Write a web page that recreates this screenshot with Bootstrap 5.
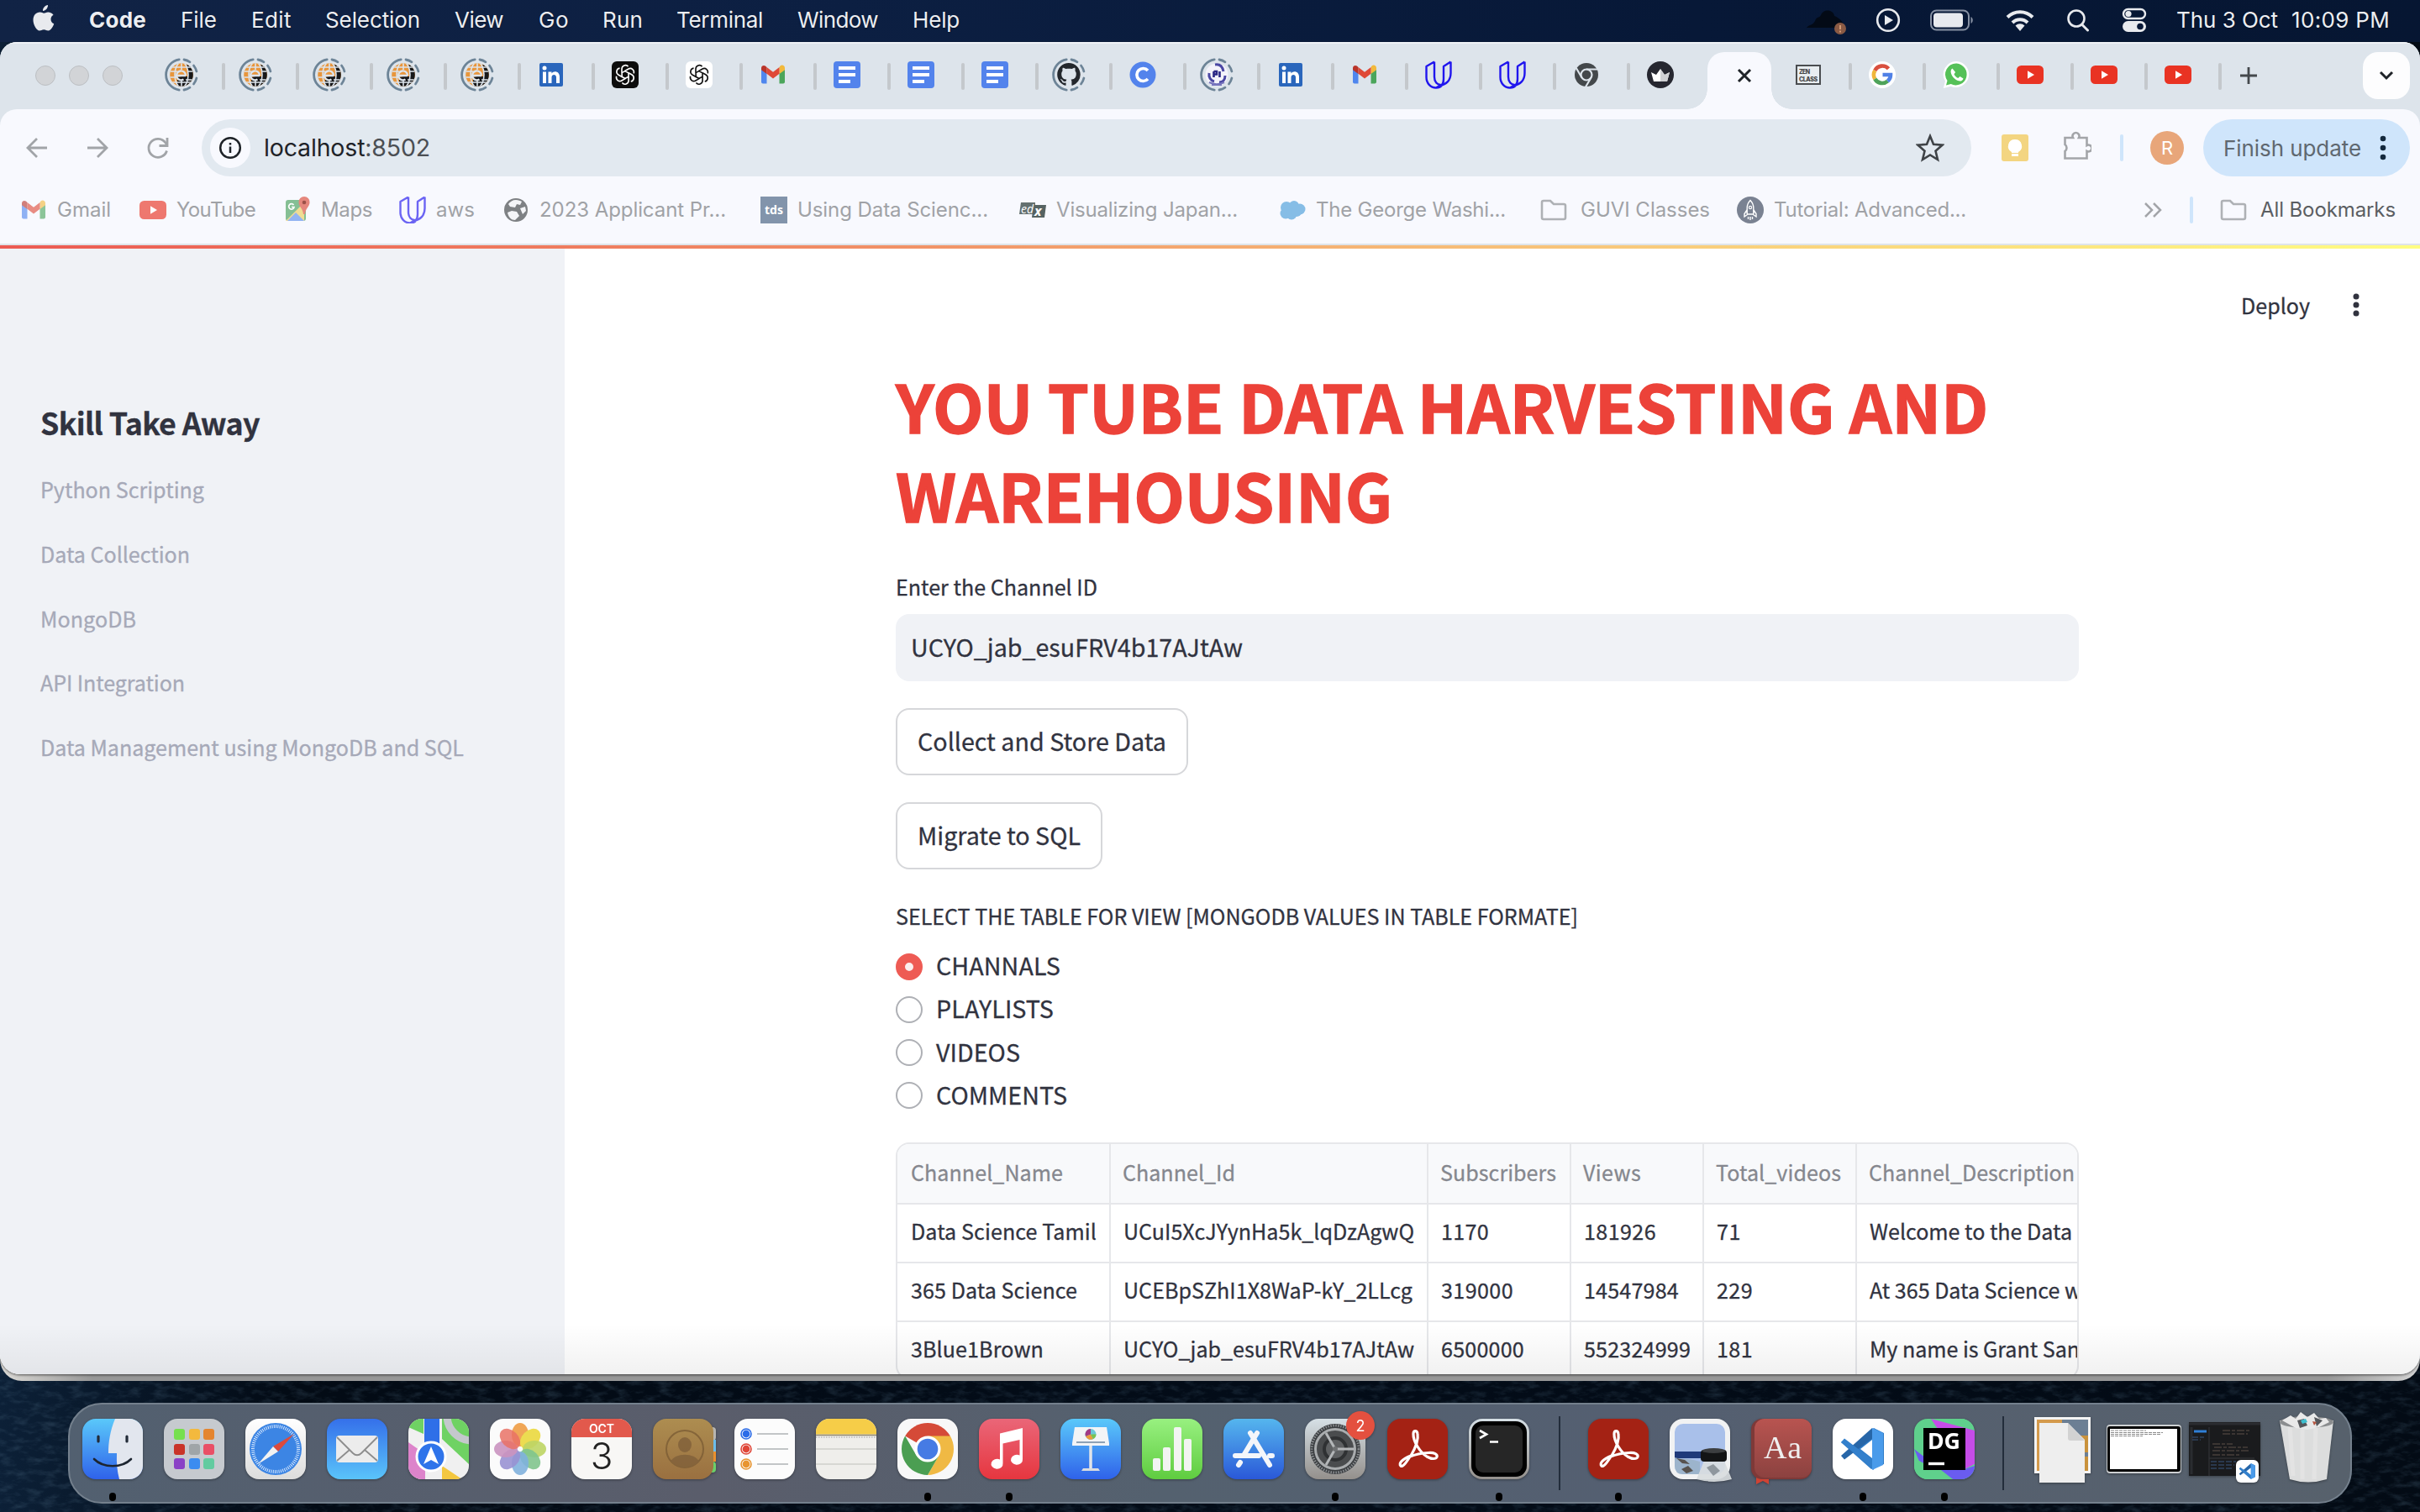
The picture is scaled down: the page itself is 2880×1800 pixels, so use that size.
<!DOCTYPE html>
<html lang="en">
<head>
<meta charset="utf-8">
<title>YouTube Data Harvesting and Warehousing</title>
<link rel="stylesheet" href="https://cdn.jsdelivr.net/npm/bootstrap@5.3.0/dist/css/bootstrap.min.css">
<style>
:root{--sys:Inter,"Liberation Sans",sans-serif;--app:"Noto Sans CJK SC","Noto Sans",sans-serif}
body{width:2880px;height:1800px;overflow:hidden;background:#030b15;font-family:var(--sys);color:#31333f}
svg{display:block;flex:none}
span{white-space:nowrap}
.desktop{width:2880px;height:1800px;background:linear-gradient(90deg,#0c2037 0,#030b15 340px,#030c18 1500px,#030b15 100%);position:relative}
.sea{position:absolute;left:0;top:1600px;opacity:.3}
.layer{position:relative}
.menubar{height:50px;background:linear-gradient(90deg,#112345 0,#0c1f42 35%,#071837 70%,#061632 100%);color:#eceef2;font-size:26px;padding:0 36px 3px 39px;text-shadow:0 1px 2px rgba(0,0,0,.4)}
.menubar .m{flex:none}
.behind{height:1594px;padding-bottom:8px;border-radius:24px 24px 26px 26px;background:linear-gradient(90deg,#dcdad6 0,#979797 110px,#979797 2770px,#d4d4d4 100%);}
.win{height:1586px;border-radius:20px 20px 24px 24px;overflow:hidden;background:#dde4eb;box-shadow:0 1px 3px rgba(0,0,0,.6)}
.strip{height:80px;border-top:2px solid #eef2f6;background:#dde4eb;padding-bottom:2px}
.lights{width:180px;padding-left:42px;gap:16px}
.lights i{width:24px;height:24px;border-radius:50%;background:#d2d4d7;border:1px solid #bcbfc3}
.tabc{width:88px;padding-left:14px;height:78px;flex:none}
.tabc svg{width:44px;height:44px;margin-top:-2px}
.tabc b{width:4px;height:32px;border-radius:2px;background:#c4c8cc;margin-left:26px;flex:none;margin-top:1px}
.tabon{width:76px;height:68px;margin:10px 8px 0 4px;padding-bottom:12px;background:#f8f9fe;border-radius:20px 20px 0 0;position:relative;align-self:flex-start}
.tabon:before,.tabon:after{content:"";position:absolute;bottom:0;width:24px;height:24px}
.tabon:before{left:-24px;background:radial-gradient(circle at 0 0,transparent 23.5px,#f8f9fe 24px)}
.tabon:after{right:-24px;background:radial-gradient(circle at 100% 0,transparent 23.5px,#f8f9fe 24px)}
.chev{width:56px;height:56px;border-radius:18px;background:#fdfdfe;margin-right:12px}
.tools{height:160px;background:#f8f9fe;border-radius:20px 20px 0 0}
.addr-row{height:92px;padding-left:28px;padding-right:12px}
.omni{width:2106px;height:68px;border-radius:34px;background:#e2e9f0;padding:0 32px 0 10px;margin-left:16px}
.omni .dot{width:48px;height:48px;border-radius:50%;background:#f8f9fe}
.url{font-size:28.5px;color:#1f2328}
.url em{font-style:normal;color:#4b4f54}
.vline{width:4px;height:32px;background:#cfe5fb;border-radius:2px}
.avatar{width:40px;height:40px;border-radius:50%;background:#e8a67a;color:#fff;font-size:22px}
.finish{width:246px;height:68px;border-radius:34px;background:#cfe5fb;color:#5f6870;font-size:26px;padding:0 28px 0 24px}
.marks{height:56px;padding-left:24px;font-size:24px;color:#a0a2a6}
.marks .bm{gap:12px;flex:none}
.marks .bm svg{width:32px;height:32px}
.hair{height:2px;background:#dfe4e9}
.deco{height:4px;background:linear-gradient(90deg,#ec5b53 0,#f08a64 33%,#f8c77b 66%,#fffd82 100%);flex:none}
.app{height:1340px;background:#fff;font-family:var(--app);position:relative;-webkit-text-stroke:.3px currentColor}
.app:after{content:"";position:absolute;left:0;right:0;bottom:0;height:60px;background:linear-gradient(180deg,rgba(0,0,0,0),rgba(0,0,0,.055));pointer-events:none}
.side{width:672px;background:#f0f2f6;padding:176px 0 0 48px;flex:none}
.side h2{font-size:35.8px;line-height:60px;font-weight:700;margin:0 0 12px;color:#31333f}
.side p{font-size:25.07px;line-height:76.8px;margin:0;color:#a6a9b8}
.main{flex:1;padding:134px 0 0 394px;position:relative}
.col-main{width:1408px}
.main h1{font-size:78.8px;line-height:105.6px;font-weight:700;color:#ec4239;margin:0;-webkit-text-stroke:1.4px currentColor}
.lab{font-size:25.07px;line-height:40px}
.inp{height:80px;border:0;border-radius:16px;background:#f0f2f6;margin-top:13px;padding:0 0 2px 18px;font-size:28.65px;color:#31333f}
.sbtn{height:80px;border:2px solid #d6d7da;border-radius:16px;background:#fff;font-size:28.65px;margin-top:32px;padding:0 0 2px;color:#31333f;font-family:var(--app);-webkit-text-stroke:.3px currentColor}
.rad{height:51.2px;font-size:28.65px;gap:16px}
.rad i{width:32px;height:32px;border-radius:50%;border:2px solid #aeb0b5;background:#fff}
.rad.on i{border:11px solid #ee5b54;background:#fbeeee}
.rad span{position:relative;top:-1px}
.frame{height:282px;border:2px solid #e6e7ea;border-radius:16px;overflow:hidden;margin-top:30px}
.frame table{width:1430px;table-layout:fixed;margin:0;font-size:25.07px;--bs-table-bg:transparent;border-collapse:separate;border-spacing:0}
.frame th,.frame td{padding:0 0 0 15px;border:0 solid #e6e7ea;border-width:0 2px 2px 0;height:70px;line-height:62px;vertical-align:top;white-space:nowrap;color:#31333f}
.frame th{height:72px;line-height:66px;font-weight:400;color:#85878e;background:#f8f9fb;padding-left:14px}
.frame tr>:first-child{padding-left:16px}
.deploy{position:absolute;right:70px;top:47px;font-size:25.07px;line-height:40px}
.deploy svg{margin-left:49px}
.dock{width:2718px;height:120px;border:2px solid #74808d;border-radius:40px;background:linear-gradient(90deg,#526070 0,#5a5d6b 28%,#54616f 48%,#545f71 68%,#57616c 100%);margin:26px 0 0 81px;padding:0 3px}
.slot{width:97.07px;height:116px;flex:none;padding-top:13px;position:relative;left:-1px}
.slot>svg{width:80px;height:80px;overflow:visible;filter:drop-shadow(0 1px 1.5px rgba(0,0,0,.35))}
.slot .run{width:8px;height:10px;border-radius:4px;background:#000;margin-top:12px}
.dsep{flex:none;display:flex;justify-content:center;padding-top:14px}
.dsep i{width:2px;height:88px;background:#232d3b}
</style>
</head>
<body>
<svg width="0" height="0" class="position-absolute">
<defs>
<linearGradient id="gBlue" x1="0" y1="0" x2="0" y2="1"><stop offset="0" stop-color="#5ac8fa"/><stop offset="1" stop-color="#2f62ea"/></linearGradient>
<linearGradient id="gMail" x1="0" y1="0" x2="0" y2="1"><stop offset="0" stop-color="#3570ea"/><stop offset="1" stop-color="#5ac4fa"/></linearGradient>
<linearGradient id="gApp" x1="0" y1="0" x2="0" y2="1"><stop offset="0" stop-color="#55b6ee"/><stop offset="1" stop-color="#2a58d8"/></linearGradient>
<linearGradient id="gMus" x1="0" y1="0" x2="0" y2="1"><stop offset="0" stop-color="#ea6678"/><stop offset="1" stop-color="#e6363f"/></linearGradient>
<linearGradient id="gGrn" x1="0" y1="0" x2="0" y2="1"><stop offset="0" stop-color="#98f080"/><stop offset="1" stop-color="#5fcc40"/></linearGradient>
<linearGradient id="gGry" x1="0" y1="0" x2="0" y2="1"><stop offset="0" stop-color="#d6e0e6"/><stop offset="1" stop-color="#94908c"/></linearGradient>
<linearGradient id="gWht" x1="0" y1="0" x2="0" y2="1"><stop offset="0" stop-color="#fff"/><stop offset="1" stop-color="#dcdcdc"/></linearGradient>
<linearGradient id="gBrn" x1="0" y1="0" x2="0" y2="1"><stop offset="0" stop-color="#ad8d50"/><stop offset="1" stop-color="#9a7040"/></linearGradient>
<linearGradient id="gBook" x1="0" y1="0" x2="0" y2="1"><stop offset="0" stop-color="#b85450"/><stop offset="1" stop-color="#8c4240"/></linearGradient>
<clipPath id="cR"><rect width="72" height="72" rx="16"/></clipPath>
<clipPath id="cG"><circle cx="22" cy="22" r="13.800"/></clipPath>

<symbol id="ring" viewBox="0 0 44 44"><g fill="none" stroke="#6d8497" stroke-width="2.800" stroke-linecap="round"><path d="M19.200 3.900a18.300 18.300 0 0 0 0 36.200"/><path d="M25 4a18 18 0 0 1 7 2.800M36.500 11a18 18 0 0 1 3.400 7M39.900 26a18 18 0 0 1-3.400 7M32 37.200a18 18 0 0 1-7 2.800"/></g></symbol>
<symbol id="e" viewBox="0 0 44 44"><use href="#ring"/><g clip-path="url(#cG)"><rect width="44" height="44" fill="#e8963c"/><path d="M28 6h14v34H17V25l5-1h8z" fill="#17181a"/><path d="M22 8v8M22 29v7M8 18h9M27 28h9M8 25h9M29 18h7M8 31h28M10 13h24" stroke="#dde4eb" stroke-width="1.600"/><ellipse cx="22" cy="22" rx="8" ry="15" fill="none" stroke="#dde4eb" stroke-width="1.600"/><path d="M16.500 23h10.500M27 23a5.500 5.500 0 1 0-2.500 4.500" fill="none" stroke="#dde4eb" stroke-width="2.400"/></g></symbol>
<symbol id="in" viewBox="0 0 44 44"><rect x="8" y="8" width="28" height="28" rx="2" fill="#2a66bc"/><circle cx="14" cy="14" r="2.500" fill="#fff"/><path d="M12 18.500h4V32h-4zM18.500 18.500h4v2c2.500-4 9.500-3 9.500 4V32h-4v-7c0-4-5.500-4-5.500 0v7h-4z" fill="#fff"/></symbol>
<symbol id="knot" viewBox="-12 -12 24 24"><g fill="none" stroke="currentColor" stroke-width="1.500" stroke-linejoin="round"><path id="k1" d="M-3.700-2.200V-6.500a4 4 0 0 1 7-2.600M-.2-4.200 3.700-6.500a4 4 0 0 1 5.600 5M-.2-4.200 3.700-2V2.200"/><use href="#k1" transform="rotate(120)"/><use href="#k1" transform="rotate(240)"/></g></symbol>
<symbol id="gptb" viewBox="0 0 44 44"><rect x="6" y="6" width="32" height="32" rx="6" fill="#0d0d0d"/><use href="#knot" x="9" y="9" width="26" height="26" color="#fff"/></symbol>
<symbol id="gptw" viewBox="0 0 44 44"><rect x="6" y="6" width="32" height="32" rx="6" fill="#fff"/><use href="#knot" x="9" y="9" width="26" height="26" color="#111"/></symbol>
<symbol id="gm" viewBox="0 0 44 44"><path d="M8 14v16.500a2 2 0 0 0 2 2h4.500V20z" fill="#4f86ee"/><path d="M36 14v16.500a2 2 0 0 1-2 2h-4.500V20z" fill="#4ba55b"/><path d="M29.500 13v8L36 16.200V14c0-3-3.200-4.300-5.300-2.700z" fill="#f2b93b"/><path d="M14.500 20.700V13L22 18.700 29.500 13v7.700L22 26.500z" fill="#df4937"/><path d="M8 14v2.200l6.500 4.800v-8l-1.700-1.400C10.800 10 8 11.500 8 14z" fill="#b9342a"/></symbol>
<symbol id="doc" viewBox="0 0 44 44"><rect x="6" y="6" width="32" height="32" rx="4" fill="#5383ec"/><path d="M12 14h20M12 22h20M12 30h14" stroke="#fff" stroke-width="4"/></symbol>
<symbol id="gh" viewBox="0 0 44 44"><use href="#ring"/><path transform="translate(8.200 8) scale(1.720)" fill="#23272c" d="M8 0C3.580 0 0 3.580 0 8c0 3.540 2.290 6.530 5.470 7.590.4.070.55-.17.55-.38 0-.19-.01-.82-.01-1.490-2.010.37-2.530-.49-2.690-.94-.09-.23-.48-.94-.82-1.130-.28-.15-.68-.52-.01-.53.63-.01 1.080.58 1.230.82.72 1.210 1.870.87 2.330.66.07-.52.28-.87.51-1.070-1.780-.2-3.640-.89-3.640-3.950 0-.87.31-1.590.82-2.150-.08-.2-.36-1.020.08-2.120 0 0 .67-.21 2.200.82.64-.18 1.320-.27 2-.27s1.360.09 2 .27c1.530-1.040 2.200-.82 2.200-.82.44 1.100.16 1.920.08 2.120.51.56.82 1.270.82 2.150 0 3.070-1.870 3.750-3.650 3.950.29.25.54.73.54 1.480 0 1.070-.01 1.930-.01 2.200 0 .21.15.46.55.38A8.010 8.010 0 0 0 16 8c0-4.420-3.580-8-8-8z"/></symbol>
<symbol id="cc" viewBox="0 0 44 44"><circle cx="22" cy="22" r="15.500" fill="#5383ec"/><path d="M28 17a7.500 7.500 0 1 0 0 10" fill="none" stroke="#fff" stroke-width="3.600"/></symbol>
<symbol id="seal" viewBox="0 0 44 44"><use href="#ring"/><circle cx="22" cy="22" r="13.500" fill="#f3f2fa"/><path d="M20 10c6-1 9 3 10 8M32 23c0 5-3 8-7 8M13 20c-1 5 2 9 6 10" fill="none" stroke="#4a47a3" stroke-width="3"/><path d="M18.500 18v7M18.500 18h3.500v3.500h-3.500M25.500 18v7" fill="none" stroke="#2a2784" stroke-width="2.600"/><path d="M13 31c6 3 12 3 18 0M16 34h12" stroke="#7674bc" stroke-width="2.200" fill="none"/></symbol>
<symbol id="ud" viewBox="0 0 44 44"><path d="M17 6.500 7.500 12v13c0 7 5 12.500 11.500 12.500l5.500-3.200M17 6.500v18c0 6 3.500 9.500 7.500 9.500M36.500 6.500 28 12v15c0 5-2 7-3.500 7.500M36.500 6.500V20c0 9-6 14-12 14.300M7.500 12v13c0 7 5 12.500 11.500 12.500S28 33 28 27" fill="none" stroke="#2015ee" stroke-width="2.400" stroke-linejoin="round"/></symbol>
<symbol id="chk" viewBox="0 0 44 44"><circle cx="22" cy="22" r="14" fill="#44484b"/><g stroke="#dde4eb" stroke-width="2.200" fill="none"><circle cx="22" cy="22" r="6.500"/><path d="M22 15.500h13M27.600 25.200 21 36.500M16.400 25.200 9.800 14"/></g></symbol>
<symbol id="crown" viewBox="0 0 44 44"><circle cx="22" cy="22" r="16" fill="#262730"/><path d="M11 19l6 3 5-7 5 7 6-3-3 11H14z" fill="#fff"/><path d="M22 15l5 7 6-3-3 11H22z" fill="#cfd0d3"/></symbol>
<symbol id="zen" viewBox="0 0 44 44"><rect x="8" y="11" width="28" height="22" fill="#e8edf0" stroke="#4a4d50" stroke-width="2"/><text x="11" y="20.500" font-family="Inter" font-weight="800" font-size="7" fill="#444" textLength="13">ZEN</text><text x="11" y="29.500" font-family="Inter" font-weight="800" font-size="7" fill="#444" textLength="22">CLASS</text></symbol>
<symbol id="goo" viewBox="0 0 44 44"><circle cx="22" cy="22" r="16" fill="#fff"/><g fill="none" stroke-width="4.600"><path d="M29.500 14.700A10 10 0 0 0 13.300 17" stroke="#d9503f"/><path d="M13.300 17a10 10 0 0 0 0 10" stroke="#f0b73a"/><path d="M13.300 27a10 10 0 0 0 15.200 2.600" stroke="#4ea35a"/><path d="M28.500 29.600C31 27.600 32 25 32 22h-9.500" stroke="#5081e6"/></g></symbol>
<symbol id="wa" viewBox="0 0 44 44"><path d="M22.500 6A15.500 15.500 0 0 0 9 29.500L6.800 38l8.700-2.300A15.500 15.500 0 1 0 22.500 6z" fill="#fff"/><path d="M22.500 8.500A13 13 0 0 0 11.500 29L10 34.600l5.800-1.500A13 13 0 1 0 22.500 8.500z" fill="#55c158"/><path d="M17.500 14.500c-4 2.500-1 9 2.500 12s9 5 10.500 0l-4-2.500-2.200 2c-2.200-.8-4-2.800-4.800-4.800l1.600-2.200z" fill="#fff"/></symbol>
<symbol id="yt" viewBox="0 0 44 44"><rect x="6" y="11" width="32" height="22" rx="5.500" fill="#e93323"/><path d="M19 17.200v9.600l8-4.800z" fill="#fff"/></symbol>
<symbol id="fold" viewBox="0 0 32 32"><path d="M2 25V7a2 2 0 0 1 2-2h8l4 4h12a2 2 0 0 1 2 2v14a2 2 0 0 1-2 2H4a2 2 0 0 1-2-2z" fill="none" stroke="#aeb1b5" stroke-width="2.600"/></symbol>
<symbol id="acro" viewBox="0 0 72 72"><rect width="72" height="72" rx="16" fill="#a42214"/><path d="M16 56c-3-3 2-8 12-12 6-10 9-20 8-26-.5-4.500-5-4.500-5 0-.3 9 8 22 16 27 6 3.500 11 3 12 .500 1-3-3-5.500-10-5-8 .5-16 2-22 4.500-5 8-9 13-11 11z" fill="none" stroke="#fff" stroke-width="3.200" stroke-linejoin="round"/></symbol>
<symbol id="vs" viewBox="0 0 72 72"><path d="M49 11 24 32.500 14 25l-4 3 36 32 15-6V17z" fill="#2f7cc8"/><path d="M47 11 10 44l4 4.500L49 22z" fill="#2766a8"/><path d="M10 28l4-4.500L49 50v11z" fill="#3380cc"/><path d="M47 11l13 6v38l-13 6z" fill="#4a9bea"/><path d="M47 25v22L33 36z" fill="#fff"/></symbol>
</defs>
</svg>

<div class="desktop">
<svg class="sea" width="2880" height="200"><filter id="wave" x="0" y="0" width="1" height="1"><feTurbulence type="fractalNoise" baseFrequency=".06 .14" numOctaves="4" seed="7"/><feColorMatrix values="0 0 0 0 .12  0 0 0 0 .22  0 0 0 0 .32  1.800 0 0 0 -.8"/></filter><rect width="2880" height="200" filter="url(#wave)"/></svg>
<div class="layer d-flex flex-column">

<header class="menubar d-flex align-items-center">
  <svg width="26" height="32" viewBox="0 0 26 32" style="margin-right:41px;margin-top:-4px"><path d="M18 0c.3 3-2.500 7-6 7-.3-3.200 2.500-6.600 6-7zM21.500 17c0-3.500 2.800-5 3-5.200C22.500 9 19.500 8.600 18.500 8.500c-2.300-.2-4 1.300-5.300 1.300-1.200 0-2.700-1.300-4.700-1.200C4 8.700.5 12 .5 18c0 5.500 4 12.500 7.500 12.500 2 0 2.700-1.300 5.200-1.300s3 1.300 5.200 1.300c3.500 0 6-5.500 6.800-8.200-2.300-1-3.700-2.600-3.700-5.300z" fill="#e8eaee"/></svg>
  <div class="m fw-bold" style="width:109px"><span data-w="68">Code</span></div>
  <div class="m" style="width:84px"><span data-w="43">File</span></div>
  <div class="m" style="width:88px"><span data-w="48">Edit</span></div>
  <div class="m" style="width:154px"><span data-w="113">Selection</span></div>
  <div class="m" style="width:100px"><span data-w="58">View</span></div>
  <div class="m" style="width:76px"><span data-w="36">Go</span></div>
  <div class="m" style="width:88px"><span data-w="48">Run</span></div>
  <div class="m" style="width:144px"><span data-w="103">Terminal</span></div>
  <div class="m" style="width:137px"><span data-w="96">Window</span></div>
  <div class="m"><span data-w="56">Help</span></div>
  <div class="ms-auto d-flex align-items-center">
    <svg width="50" height="34" viewBox="0 0 50 34" class="mt-1" style="margin-right:33px"><path d="M1 24c3-4 8-3 10-8 2-6 5-3 7-7 3-8 15-7 16 1 5 2 11 6 12 14z" fill="#030a16"/><circle cx="41" cy="25" r="7" fill="#8a5a44"/><path d="M41 21v5M41 27.500v2" stroke="#d9a07a" stroke-width="1.800"/></svg>
    <svg width="30" height="30" viewBox="0 0 30 30" style="margin-right:35px"><circle cx="15" cy="15" r="12.800" fill="none" stroke="#e8eaee" stroke-width="2.600"/><path d="M11 9v12l10-6z" fill="#e8eaee"/></svg>
    <svg width="52" height="26" viewBox="0 0 52 26" style="margin-right:37px"><rect x="1" y="1.500" width="45" height="23" rx="6.500" fill="none" stroke="#8791a3" stroke-width="2"/><rect x="4" y="4.500" width="35" height="17" rx="4" fill="#e8eaee"/><path d="M48.500 9c3 1.500 3 6.500 0 8z" fill="#8791a3"/></svg>
    <svg width="36" height="28" viewBox="0 0 36 28" style="margin-right:37px"><g fill="none" stroke="#e8eaee" stroke-width="4"><path d="M3 10.500a21 21 0 0 1 30 0"/><path d="M9 17a12.500 12.500 0 0 1 18 0"/></g><path d="M12.500 20.500a8 8 0 0 1 11 0L18 27z" fill="#e8eaee"/></svg>
    <svg width="28" height="28" viewBox="0 0 28 28" style="margin-right:38px"><circle cx="12" cy="12" r="9.500" fill="none" stroke="#e8eaee" stroke-width="2.600"/><path d="m18.500 19 7 7" stroke="#e8eaee" stroke-width="3" stroke-linecap="round"/></svg>
    <svg width="30" height="30" viewBox="0 0 30 30" style="margin-right:35px"><rect x="2" y="2" width="26" height="11" rx="5.500" fill="none" stroke="#e8eaee" stroke-width="2.400"/><circle cx="8" cy="7.500" r="3.600" fill="#e8eaee"/><rect x="1" y="16" width="28" height="13" rx="6.500" fill="#e8eaee"/><circle cx="22" cy="22.500" r="3.800" fill="#071837"/></svg>
    <span data-w="121">Thu 3 Oct</span><span data-w="117" style="margin-left:16px">10:09 PM</span>
  </div>
</header>

<div class="behind"><div class="win d-flex flex-column">
  <div class="strip d-flex align-items-center">
    <div class="lights d-flex"><i></i><i></i><i></i></div>
    <div class="d-flex" id="tabsA"></div>
    <div class="tabon d-flex align-items-center justify-content-center"><svg width="18" height="18" viewBox="0 0 18 18" style="margin-left:12px"><path d="m2 2 14 14M16 2 2 16" stroke="#1f2328" stroke-width="3"/></svg></div>
    <div class="d-flex" id="tabsB"></div>
    <svg width="22" height="22" viewBox="0 0 22 22" style="margin-left:21px"><path d="M11 1v20M1 11h20" stroke="#44484c" stroke-width="2.800"/></svg>
    <div class="chev ms-auto d-flex align-items-center justify-content-center"><svg width="18" height="12" viewBox="0 0 18 12"><path d="m2 2 7 7 7-7" fill="none" stroke="#1f2328" stroke-width="3"/></svg></div>
  </div>
  <div class="tools">
    <div class="addr-row d-flex align-items-center">
      <svg width="32" height="32" viewBox="0 0 32 32" style="margin-right:40px"><path d="M28 16H6M16 5 5 16l11 11" fill="none" stroke="#a1a4a8" stroke-width="2.800"/></svg>
      <svg width="32" height="32" viewBox="0 0 32 32" style="margin-right:40px"><path d="M4 16h22M16 5l11 11-11 11" fill="none" stroke="#a1a4a8" stroke-width="2.800"/></svg>
      <svg width="32" height="32" viewBox="0 0 32 32" style="margin-right:20px"><path d="M26.500 19.500A11 11 0 1 1 25 10l2 3" fill="none" stroke="#a1a4a8" stroke-width="2.800"/><path d="M27 4v9.500h-9.500" fill="none" stroke="#a1a4a8" stroke-width="2.800"/></svg>
      <div class="omni d-flex align-items-center">
        <div class="dot d-flex align-items-center justify-content-center"><svg width="28" height="28" viewBox="0 0 28 28"><circle cx="14" cy="14" r="11.800" fill="none" stroke="#1f2328" stroke-width="2.500"/><path d="M14 12.500V20M14 8v2.600" stroke="#1f2328" stroke-width="2.500"/></svg></div>
        <span class="url" style="margin-left:16px" data-w="198">localhost<em>:8502</em></span>
        <svg class="ms-auto" width="34" height="34" viewBox="0 0 34 34"><path d="m17 3 4 9.800 10.500.9-8 7 2.500 10.300-9-5.500-9 5.500 2.500-10.300-8-7 10.500-.9z" fill="none" stroke="#3f4347" stroke-width="2.600"/></svg>
      </div>
      <svg width="32" height="32" viewBox="0 0 32 32" style="margin-left:36px"><rect width="32" height="32" rx="3" fill="#f3d581"/><path d="M16 6a8 8 0 0 0-4 15v1h8v-1a8 8 0 0 0-4-15zM12 23h8v3h-8z" fill="#fff"/></svg>
      <svg width="34" height="36" viewBox="0 0 34 36" style="margin-left:41px;margin-top:-4px"><path d="M2.500 8h9.500a4 4 0 1 1 7 0h9.500v9a4 4 0 1 1 0 7v8.500h-26V24a5 5 0 0 0 0-8z" fill="none" stroke="#a3a5a9" stroke-width="2.600"/></svg>
      <div class="vline" style="margin-left:34px"></div>
      <div class="avatar d-flex align-items-center justify-content-center" style="margin-left:32px">R</div>
      <div class="finish d-flex align-items-center ms-auto"><span data-w="164">Finish update</span><svg class="ms-auto" width="8" height="30" viewBox="0 0 8 30"><g fill="#14293d"><circle cx="4" cy="4" r="3.300"/><circle cx="4" cy="15" r="3.300"/><circle cx="4" cy="26" r="3.300"/></g></svg></div>
    </div>
    <div class="marks d-flex align-items-center">
      <div class="bm d-flex align-items-center" style="width:142px"><svg viewBox="6 6 32 32" opacity=".62"><use href="#gm" width="44" height="44"/></svg><span data-w="64">Gmail</span></div>
      <div class="bm d-flex align-items-center" style="width:172px"><svg viewBox="6 6 32 32" opacity=".65"><use href="#yt" width="44" height="44"/></svg><span data-w="94">YouTube</span></div>
      <div class="bm d-flex align-items-center" style="width:137px"><svg viewBox="0 0 32 32"><rect x="2" y="4" width="24" height="25" rx="3" fill="#85bf94"/><path d="M2 29 24 7v22z" fill="#f0dc94"/><path d="M4 29l10-10 10 10z" fill="#92b4f2"/><path d="M24 0a6.500 6.500 0 0 0-6.500 7c0 5 5 7 5.500 14h2c.5-7 5.500-9 5.500-14A6.500 6.500 0 0 0 24 0z" fill="#e5877d"/><circle cx="24" cy="7" r="2.300" fill="#9c5149"/><path d="M11.500 10a3.200 3.200 0 1 0 .5 2.500H9" fill="none" stroke="#fff" stroke-width="1.700"/></svg><span data-w="61">Maps</span></div>
      <div class="bm d-flex align-items-center" style="width:123px"><svg viewBox="6 6 32 32" opacity=".65"><use href="#ud" width="44" height="44"/></svg><span data-w="46">aws</span></div>
      <div class="bm d-flex align-items-center" style="width:307px"><svg viewBox="0 0 32 32"><circle cx="16" cy="16" r="14" fill="#7e8184"/><path d="M16 4c-4 0-7 2-9 5l2 3 6 1 2-4 4 1 2-4c-2-1-4-2-7-2zM6 19l5-2 6 1 3 5-5 5c-5 0-8-4-9-9zM21 14l6-2 1 5-4 4z" fill="#f4f5f8"/></svg><span data-w="222">2023 Applicant Pr...</span></div>
      <div class="bm d-flex align-items-center" style="width:308px"><svg viewBox="0 0 32 32"><rect width="32" height="32" fill="#8294ab"/><text x="5" y="21" font-size="14" font-weight="700" font-family="Noto Sans" fill="#fff" textLength="22">tds</text></svg><span data-w="227">Using Data Scienc...</span></div>
      <div class="bm d-flex align-items-center" style="width:309px"><svg viewBox="0 0 32 32"><path d="M2 7h17v14H0z" fill="#64706f"/><path d="M17 10h15l-2 15H15z" fill="#566362"/><text x="2" y="19.500" font-size="14" font-style="italic" font-family="Open Sans" fill="#fff" textLength="15">ed</text><text x="18" y="23" font-size="16" font-weight="700" font-style="italic" font-family="Open Sans" fill="#fff">x</text></svg><span data-w="216">Visualizing Japan...</span></div>
      <div class="bm d-flex align-items-center" style="width:311px"><svg viewBox="0 0 32 32"><g fill="#86bde6"><circle cx="9" cy="13" r="7"/><circle cx="18" cy="11" r="6"/><circle cx="25" cy="15" r="6.500"/><circle cx="8" cy="20" r="6.500"/><circle cx="15" cy="21" r="6.500"/><circle cx="21" cy="18" r="6"/></g></svg><span data-w="226">The George Washi...</span></div>
      <div class="bm d-flex align-items-center" style="width:234px"><svg viewBox="0 0 32 32"><use href="#fold" width="32" height="32"/></svg><span data-w="154" class="ms-1">GUVI Classes</span></div>
      <div class="bm d-flex align-items-center"><svg viewBox="0 0 32 32"><circle cx="16" cy="16" r="16" fill="#7a8292"/><path d="M16 4.500c3 3 3.800 6 3.800 9V21h-7.600v-7.500c0-3 .8-6 3.800-9zM12 16l-3 4.500V24l3.500-2.500M20 16l3 4.500V24l-3.500-2.500M13.500 24v3M18.500 24v3M16 24v4" fill="none" stroke="#fff" stroke-width="1.400"/><circle cx="16" cy="13" r="1.600" fill="none" stroke="#fff" stroke-width="1.200"/></svg><span data-w="229">Tutorial: Advanced...</span></div>
      <div class="ms-auto d-flex align-items-center"><svg width="22" height="20" viewBox="0 0 22 20"><path d="m2 2 8 8-8 8M12 2l8 8-8 8" fill="none" stroke="#a3a5a9" stroke-width="2.500"/></svg><div class="vline" style="margin:0 32px 0 33px"></div><svg width="32" height="32"><use href="#fold"/></svg><span data-w="161" style="color:#5b5e62;margin:0 29px 0 16px">All Bookmarks</span></div>
    </div>
  </div>
  <div class="hair"></div>
  <div class="deco"></div>
  <div class="app d-flex">
    <aside class="side">
      <h2><span data-w="261">Skill Take Away</span></h2>
      <p><span data-w="195">Python Scripting</span></p>
      <p><span data-w="178">Data Collection</span></p>
      <p><span data-w="114">MongoDB</span></p>
      <p><span data-w="172">API Integration</span></p>
      <p><span data-w="504">Data Management using MongoDB and SQL</span></p>
    </aside>
    <main class="main">
      <div class="deploy d-flex align-items-center"><span data-w="82">Deploy</span><svg width="12" height="32" viewBox="0 0 12 32"><g fill="#31333f"><circle cx="6" cy="6" r="3.500"/><circle cx="6" cy="16" r="3.500"/><circle cx="6" cy="26" r="3.500"/></g></svg></div>
      <div class="col-main">
        <h1><span data-w="1300">YOU TUBE DATA HARVESTING AND</span><br><span data-w="591">WAREHOUSING</span></h1>
        <div class="lab" style="margin-top:37px"><span data-w="240">Enter the Channel ID</span></div>
        <div class="inp d-flex align-items-center"><span data-w="395">UCYO_jab_esuFRV4b17AJtAw</span></div>
        <button class="sbtn d-flex align-items-center justify-content-center" style="width:348px"><span data-w="296">Collect and Store Data</span></button>
        <button class="sbtn d-flex align-items-center justify-content-center" style="width:246px"><span data-w="194">Migrate to SQL</span></button>
        <div class="lab" style="margin:35px 0 15px"><span data-w="812">SELECT THE TABLE FOR VIEW [MONGODB VALUES IN TABLE FORMATE]</span></div>
        <div class="rad on d-flex align-items-center"><i></i><span data-w="148">CHANNALS</span></div>
        <div class="rad d-flex align-items-center"><i></i><span data-w="140">PLAYLISTS</span></div>
        <div class="rad d-flex align-items-center"><i></i><span data-w="100">VIDEOS</span></div>
        <div class="rad d-flex align-items-center"><i></i><span data-w="156">COMMENTS</span></div>
        <div class="frame">
          <table class="table">
            <colgroup><col style="width:254px"><col style="width:378px"><col style="width:170px"><col style="width:158px"><col style="width:182px"><col></colgroup>
            <thead><tr><th><span data-w="181">Channel_Name</span></th><th><span data-w="134">Channel_Id</span></th><th><span data-w="138">Subscribers</span></th><th><span data-w="69">Views</span></th><th><span data-w="149">Total_videos</span></th><th><span data-w="245">Channel_Description</span></th></tr></thead>
            <tbody>
            <tr><td><span data-w="221">Data Science Tamil</span></td><td><span data-w="346">UCuI5XcJYynHa5k_lqDzAgwQ</span></td><td><span data-w="57">1170</span></td><td><span data-w="86">181926</span></td><td><span data-w="29">71</span></td><td><span data-w="241">Welcome to the Data</span></td></tr>
            <tr><td><span data-w="198">365 Data Science</span></td><td><span data-w="344">UCEBpSZhI1X8WaP-kY_2LLcg</span></td><td><span data-w="86">319000</span></td><td><span data-w="113">14547984</span></td><td><span data-w="43">229</span></td><td><span data-w="252">At 365 Data Science w</span></td></tr>
            <tr><td><span data-w="158">3Blue1Brown</span></td><td><span data-w="346">UCYO_jab_esuFRV4b17AJtAw</span></td><td><span data-w="99">6500000</span></td><td><span data-w="127">552324999</span></td><td><span data-w="43">181</span></td><td><span data-w="250">My name is Grant San</span></td></tr>
            </tbody>
          </table>
        </div>
      </div>
    </main>
  </div>
</div></div>

<footer class="dock d-flex">
  <div class="slot d-flex flex-column align-items-center"><svg viewBox="-4 -4 80 80"><g clip-path="url(#cR)"><rect width="72" height="72" fill="url(#gBlue)"/><path d="M39 0c-6 14-8 28-8 41h10c-.5 12 .5 22 3 31h28V0z" fill="#e2e6ee"/></g><path d="M19 21v6M53 21v6" stroke="#222b38" stroke-width="3.200" stroke-linecap="round"/><path d="M14 48c11 11 33 11 44 0" fill="none" stroke="#1d2530" stroke-width="2.600" stroke-linecap="round"/></svg><div class="run"></div></div>
  <div class="slot d-flex flex-column align-items-center"><svg viewBox="-4 -4 80 80"><rect width="72" height="72" rx="16" fill="#c6cacf"/><g><rect x="12" y="12" width="13" height="13" rx="3" fill="#76e04e"/><rect x="30" y="12" width="13" height="13" rx="3" fill="#f3b93d"/><rect x="47" y="12" width="13" height="13" rx="3" fill="#e4852f"/><rect x="12" y="30" width="13" height="13" rx="3" fill="#c93428"/><rect x="30" y="30" width="13" height="13" rx="3" fill="#9fa5a8"/><rect x="47" y="30" width="13" height="13" rx="3" fill="#e94f66"/><rect x="12" y="47" width="13" height="13" rx="3" fill="#8a42c6"/><rect x="30" y="47" width="13" height="13" rx="3" fill="#3b8cf0"/><rect x="47" y="47" width="13" height="13" rx="3" fill="#62cba0"/></g></svg></div>
  <div class="slot d-flex flex-column align-items-center"><svg viewBox="-4 -4 80 80"><rect width="72" height="72" rx="16" fill="url(#gWht)"/><circle cx="36" cy="36" r="31" fill="#3c85e4"/><circle cx="36" cy="36" r="27" fill="none" stroke="#e6f1ff" stroke-width="4" stroke-dasharray=".9 1.450"/><path d="M58 18 33 33l6 6z" fill="#dc4a3c"/><path d="M15 54l18-21 6 6z" fill="#f2f2f2"/></svg></div>
  <div class="slot d-flex flex-column align-items-center"><svg viewBox="-4 -4 80 80"><rect width="72" height="72" rx="16" fill="url(#gMail)"/><rect x="11" y="20" width="50" height="32" rx="4" fill="#ececec"/><path d="m12 50 15-13M60 50 45 37M12 22l19 19c3 3 7 3 10 0l19-19" fill="none" stroke="#8d8d8d" stroke-width="1.800"/></svg></div>
  <div class="slot d-flex flex-column align-items-center"><svg viewBox="-4 -4 80 80"><g clip-path="url(#cR)"><rect width="72" height="72" fill="#f0f0f0"/><path d="M0 0h18v18L0 10zM40 0h32v54L40 24z" fill="#6fd263"/><path d="M0 28l20 14v30H0z" fill="#dd84cb"/><path d="M40 56l24 16H40z" fill="#f3c73f"/><path d="M46-4a30 30 0 0 0 30 30" fill="none" stroke="#c4c8cc" stroke-width="9"/><path d="M19 0h18v40H19z" fill="#2f6fe8"/></g><circle cx="27" cy="45" r="17" fill="#2f74ea" stroke="#fff" stroke-width="3"/><path d="m27 33 9 21-9-5-9 5z" fill="#fff"/></svg></div>
  <div class="slot d-flex flex-column align-items-center"><svg viewBox="-4 -4 80 80"><rect width="72" height="72" rx="16" fill="#fbfbfb"/><g opacity=".85" style="mix-blend-mode:multiply"><ellipse cx="36" cy="19" rx="10" ry="14" fill="#f29a3a"/><ellipse cx="36" cy="19" rx="10" ry="14" fill="#eedb33" transform="rotate(45 36 36)"/><ellipse cx="36" cy="19" rx="10" ry="14" fill="#b5d24a" transform="rotate(90 36 36)" opacity=".9"/><ellipse cx="36" cy="19" rx="10" ry="14" fill="#6bbf7c" transform="rotate(135 36 36)" opacity=".9"/><ellipse cx="36" cy="19" rx="10" ry="14" fill="#6ba7dc" transform="rotate(180 36 36)" opacity=".9"/><ellipse cx="36" cy="19" rx="10" ry="14" fill="#8b82cf" transform="rotate(225 36 36)" opacity=".9"/><ellipse cx="36" cy="19" rx="10" ry="14" fill="#c583b8" transform="rotate(270 36 36)" opacity=".9"/><ellipse cx="36" cy="19" rx="10" ry="14" fill="#ea5a4c" transform="rotate(315 36 36)" opacity=".85"/></g></svg></div>
  <div class="slot d-flex flex-column align-items-center"><svg viewBox="-4 -4 80 80"><g clip-path="url(#cR)"><rect width="72" height="72" fill="#f8f7f5"/><rect width="72" height="22" fill="#e2594c"/></g><text x="36" y="16.500" text-anchor="middle" font-family="Inter" font-weight="600" font-size="14" fill="#fff" textLength="30">OCT</text><text x="36" y="60" text-anchor="middle" font-family="Inter" font-weight="300" font-size="44" fill="#222">3</text></svg></div>
  <div class="slot d-flex flex-column align-items-center"><svg viewBox="-4 -4 80 80"><rect x="60" y="10" width="15" height="16" rx="4" fill="#b7b5b0"/><rect x="60" y="25" width="15" height="14" fill="#6cbdea"/><rect x="60" y="39" width="15" height="12" fill="#e9902f"/><rect x="60" y="51" width="15" height="13" rx="4" fill="#6bd06a"/><rect width="72" height="72" rx="16" fill="url(#gBrn)"/><g fill="#80603a" opacity=".8"><circle cx="38" cy="36" r="22" fill="none" stroke="#7c5d35" stroke-width="2"/><ellipse cx="38" cy="31" rx="8" ry="9"/><path d="M21 51c5-11 29-11 34 0-9 9-25 9-34 0z"/></g></svg></div>
  <div class="slot d-flex flex-column align-items-center"><svg viewBox="-4 -4 80 80"><rect width="72" height="72" rx="16" fill="#fcfcfc"/><g stroke="#c2c5c7" stroke-width="2"><path d="M27 18h37M27 36h37M27 54h37"/></g><g stroke-width="1.600"><circle cx="14" cy="18" r="4.400" fill="#2c6ce8"/><circle cx="14" cy="18" r="6" fill="none" stroke="#2c6ce8"/><circle cx="14" cy="36" r="4.400" fill="#df4638"/><circle cx="14" cy="36" r="6" fill="none" stroke="#df4638"/><circle cx="14" cy="54" r="4.400" fill="#e89530"/><circle cx="14" cy="54" r="6" fill="none" stroke="#e89530"/></g></svg></div>
  <div class="slot d-flex flex-column align-items-center"><svg viewBox="-4 -4 80 80"><g clip-path="url(#cR)"><rect width="72" height="72" fill="#efeeeb"/><rect width="72" height="18.500" fill="#f6cd48"/><path d="M0 19.500h72" stroke="#8f8872" stroke-width="1.500"/><path d="M0 22h72" stroke="#bbb" stroke-width="1.500" stroke-dasharray="1.500 1.500"/><path d="M0 36h72M0 54h72" stroke="#d0cfcb" stroke-width="1.500"/></g></svg></div>
  <div class="slot d-flex flex-column align-items-center"><svg viewBox="-4 -4 80 80"><rect width="72" height="72" rx="16" fill="#f8f8f8"/><path d="M36 36 9.150 20.500A31 31 0 0 1 62.850 20.500z" fill="#d54a38"/><path d="M36 20.500h26.850A31 31 0 0 1 36 67l13.400-23.200z" fill="#f0b944"/><path d="M9.150 20.500A31 31 0 0 0 36 67l13.400-23.200L36 51 22.600 43.700z" fill="#4b9e52"/><circle cx="36" cy="36" r="15.500" fill="#fff"/><circle cx="36" cy="36" r="12.300" fill="#467be4"/></svg><div class="run"></div></div>
  <div class="slot d-flex flex-column align-items-center"><svg viewBox="-4 -4 80 80"><rect width="72" height="72" rx="16" fill="url(#gMus)"/><path d="M25 17.500 52 11v37a7 6 0 1 1-3.500-4.500V25l-20 4.500V53a7 6 0 1 1-3.500-4.500z" fill="#fff"/></svg><div class="run"></div></div>
  <div class="slot d-flex flex-column align-items-center"><svg viewBox="-4 -4 80 80"><rect width="72" height="72" rx="16" fill="url(#gBlue)"/><path d="M17 10h38l3 19v3H14v-3z" fill="#f2f4f6"/><path d="M19 28h34" stroke="#8ea2b6" stroke-width="2"/><circle cx="36" cy="18.500" r="6.500" fill="#6cc8d8"/><path d="M36 18.500V12a6.500 6.500 0 0 0-6 9z" fill="#a23a86"/><path d="M36 18.500l-6 2.500a6.500 6.500 0 0 0 9 3z" fill="#ee9a3a"/><path d="M36 18.500l3 5.500a6.500 6.500 0 0 0 3.500-5.500z" fill="#78c350"/><path d="M36 32v28" stroke="#e2e4e8" stroke-width="3.500"/><path d="M27 59h18l2 3H25z" fill="#d9dbe0"/></svg></div>
  <div class="slot d-flex flex-column align-items-center"><svg viewBox="-4 -4 80 80"><rect width="72" height="72" rx="16" fill="url(#gGrn)"/><g fill="#f2f4f2"><rect x="13" y="47" width="9" height="15" rx="2"/><rect x="25" y="34" width="9" height="28" rx="2"/><rect x="38" y="10" width="9" height="52" rx="2"/><rect x="50" y="24" width="9" height="38" rx="2"/></g></svg></div>
  <div class="slot d-flex flex-column align-items-center"><svg viewBox="-4 -4 80 80"><rect width="72" height="72" rx="16" fill="url(#gApp)"/><g stroke="#f4f6fa" stroke-width="6" stroke-linecap="round"><path d="M40 17 25 42M32 17l23 38M20 52l-2 3M14 44h28M55 44h3"/></g></svg></div>
  <div class="slot d-flex flex-column align-items-center"><svg viewBox="-4 -4 80 80"><rect width="72" height="72" rx="16" fill="url(#gGry)"/><circle cx="36" cy="36" r="30" fill="#3a3d40"/><circle cx="36" cy="36" r="28" fill="none" stroke="#8a8d90" stroke-width="3" stroke-dasharray="1.500 1.500"/><circle cx="36" cy="36" r="23.500" fill="#4a4c4e" stroke="#a9acae" stroke-width="3"/><circle cx="36" cy="36" r="13" fill="#5e6062" stroke="#2f3133" stroke-width="4"/><path d="M36 36h22M36 36 25 17M36 36 25 55" stroke="#b3b6b8" stroke-width="3"/><circle cx="36" cy="36" r="3" fill="#6e7072"/><circle cx="66" cy="8" r="17" fill="#e4503f"/><text x="66" y="14.500" text-anchor="middle" font-family="Inter" font-size="18" fill="#fff">2</text></svg><div class="run"></div></div>
  <div class="slot d-flex flex-column align-items-center"><svg viewBox="-4 -4 80 80"><use href="#acro" width="72" height="72"/></svg></div>
  <div class="slot d-flex flex-column align-items-center"><svg viewBox="-4 -4 80 80"><rect width="72" height="72" rx="16" fill="url(#gGry)"/><rect x="3" y="3" width="66" height="66" rx="13" fill="#000"/><rect x="8" y="8" width="56" height="56" rx="9" fill="#262626"/><path d="m13 14 8 4.500-8 4.500M25 27.500h10" fill="none" stroke="#fff" stroke-width="2.600"/></svg><div class="run"></div></div>
  <div class="dsep" style="width:45px"><i></i></div>
  <div class="slot d-flex flex-column align-items-center"><svg viewBox="-4 -4 80 80"><use href="#acro" width="72" height="72"/></svg><div class="run"></div></div>
  <div class="slot d-flex flex-column align-items-center"><svg viewBox="-4 -4 80 80"><rect width="72" height="72" rx="16" fill="#f1f2f3"/><rect x="6" y="6" width="60" height="60" rx="10" fill="#a9c0ea"/><path d="M6 39h60v8H6z" fill="#1f3a7a"/><path d="M6 46c8 3 14 0 30 5v15H16q-10 0-10-10z" fill="#9cb4cc"/><path d="M8 47l10 2 6 5-9-1zM14 60l8-4 6 6-8 3z" fill="#57524e"/><path d="M41 50h24l9 22q-21 6-42 0z" fill="#d9dde0" opacity=".92"/><path d="M44 58l8-4 8 8-8 6z" fill="#8f979e"/><rect x="37" y="37" width="31" height="14" rx="4" fill="#131415"/><ellipse cx="52.500" cy="38" rx="14" ry="3" fill="#3c3e40"/></svg></div>
  <div class="slot d-flex flex-column align-items-center"><svg viewBox="-4 -4 80 80"><path d="M6 66h15v12l-7-4-8 4z" fill="#cf4334"/><rect width="72" height="72" rx="13" fill="#7e3938"/><rect x="4" y="0" width="68" height="70" rx="12" fill="url(#gBook)"/><text x="15" y="47" font-family="Liberation Serif" font-size="38" fill="#efefef" textLength="45">Aa</text></svg></div>
  <div class="slot d-flex flex-column align-items-center"><svg viewBox="-4 -4 80 80"><rect width="72" height="72" rx="16" fill="#fff"/><use href="#vs" width="72" height="72"/></svg><div class="run"></div></div>
  <div class="slot d-flex flex-column align-items-center"><svg viewBox="-4 -4 80 80"><g clip-path="url(#cR)"><rect width="72" height="72" fill="#5fd08c"/><path d="M20 0l52 14v40L60 60z" fill="#c64ce8"/><path d="M20 0h52v10z" fill="#5fd08c"/><path d="M0 36l46 36h26V56L60 60H10z" fill="#6a5cf0"/><path d="M6 50l40 22H0V56z" fill="#5fd08c"/></g><rect x="11" y="11" width="50" height="50" fill="#000"/><text x="16" y="36" font-family="Noto Sans" font-weight="700" font-size="26" fill="#fff" textLength="39" lengthAdjust="spacingAndGlyphs">DG</text><path d="M17 53.500h19" stroke="#fff" stroke-width="3.400"/></svg><div class="run"></div></div>
  <div class="dsep" style="width:42px"><i></i></div>
  <div class="slot d-flex flex-column align-items-center"><svg viewBox="-4 -4 80 80"><rect x="4" y="-2" width="67" height="67" fill="#f4f4f4"/><rect x="7" y="1" width="61" height="61" fill="#6c7f94"/><path d="M7 1h30v61H7z" fill="#d49a4c"/><path d="M48 20h20v20H48zM60 45h8v17h-8z" fill="#c9923c"/><path d="M10 76V5h34l20 20v51z" fill="#eee"/><path d="M44 5v18q0 3 3 3h17z" fill="#d2d2d2"/></svg></div>
  <div class="slot d-flex flex-column align-items-center"><svg viewBox="-4 -4 80 80"><rect x="-7" y="7" width="89" height="58" rx="4" fill="#cdd0d2"/><rect x="-6" y="9" width="87" height="54" rx="3" fill="#000"/><rect x="-3" y="12" width="80" height="48" fill="#fff"/><path d="M-2 14h42M-2 16.500h62M-2 18.500h60M-2 20.500h38" stroke="#8d8d8d" stroke-width="1" stroke-dasharray="4 1"/></svg></div>
  <div class="slot d-flex flex-column align-items-center"><svg viewBox="-4 -4 80 80"><rect x="-6" y="4" width="85" height="64" fill="#1a1b1d"/><path d="M-6 6h85M-3 10v56" stroke="#2a2c30" stroke-width="3"/><path d="M0 15h15" stroke="#2f7fd6" stroke-width="3"/><path d="M18 10v58M18 47h54" stroke="#37393d" stroke-width="1"/><g stroke-width="1.200" stroke="#5d5048" stroke-dasharray="9 2 4 2"><path d="M34 14h34M34 18h30M22 30h24M24 34h40M22 38h44M22 43h32"/></g><path d="M20 51h30M20 55h28M20 59h26M-2 22h14M-2 25h10" stroke="#38577f" stroke-width="1.200" stroke-dasharray="7 2"/><rect x="50" y="49" width="27" height="27" rx="6" fill="#fff"/><use href="#vs" x="50" y="49" width="27" height="27"/></svg></div>
  <div class="slot d-flex flex-column align-items-center"><svg viewBox="-4 -4 80 80"><path d="M5 2h64l-8 70q-22 7-44 0z" fill="#dcdddd"/><path d="M17 8l4 60M32 8v64M48 8l-2 64" stroke="#e8e8e8" stroke-width="5" opacity=".6"/><ellipse cx="37" cy="4" rx="32" ry="7" fill="#8b8d8f"/><path d="M8 2l10-6 6 4 6-8 8 6 8-5 6 7 8-1 4 5-12 6-14 3-14-2z" fill="#e9e9e9"/><path d="M26 2l8-2 4 8-9 3zM46-2l10 4-7 7z" fill="#55585c"/><path d="M30 2l6-2 2 4-6 2z" fill="#3fc0d0"/><path d="M44 3l5 1-3 4z" fill="#b3543f"/></svg></div>
</footer>
</div>
</div>

<script src="https://cdn.jsdelivr.net/npm/bootstrap@5.3.0/dist/js/bootstrap.bundle.min.js"></script>
<script>
// Open tabs, left and right of the active one; a divider follows each, save the one beside the active tab.
const row=(id,names,skipLast)=>document.getElementById(id).innerHTML=names.map((n,i)=>
  `<div class="tabc d-flex align-items-center"><svg><use href="#${n}"/></svg>${skipLast&&i===names.length-1?'':'<b></b>'}</div>`).join('');
row('tabsA',['e','e','e','e','e','in','gptb','gptw','gm','doc','doc','doc','gh','cc','seal','in','gm','ud','ud','chk','crown'],true);
row('tabsB',['zen','goo','wa','yt','yt','yt'],false);
// Track each label to its set width.
document.querySelectorAll('[data-w]').forEach(s=>{
  s.style.display='inline-block';
  const n=s.textContent.length, w=s.getBoundingClientRect().width;
  s.style.letterSpacing=((+s.dataset.w-w)/n).toFixed(3)+'px';
});
</script>
</body>
</html>
